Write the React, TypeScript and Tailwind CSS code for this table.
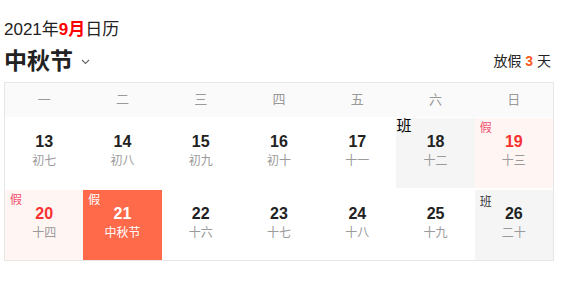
import React from 'react';

type Day = {
  n: number;
  lunar: string;
  kind?: 'work' | 'rest' | 'festival';
};

const weekdays = ['一', '二', '三', '四', '五', '六', '日'];

const rows: Day[][] = [
  [
    { n: 13, lunar: '初七' },
    { n: 14, lunar: '初八' },
    { n: 15, lunar: '初九' },
    { n: 16, lunar: '初十' },
    { n: 17, lunar: '十一' },
    { n: 18, lunar: '十二', kind: 'work' },
    { n: 19, lunar: '十三', kind: 'rest' },
  ],
  [
    { n: 20, lunar: '十四', kind: 'rest' },
    { n: 21, lunar: '中秋节', kind: 'festival' },
    { n: 22, lunar: '十六' },
    { n: 23, lunar: '十七' },
    { n: 24, lunar: '十八' },
    { n: 25, lunar: '十九' },
    { n: 26, lunar: '二十', kind: 'work' },
  ],
];

function Cell({ day, first }: { day: Day; first: boolean }) {
  const bg =
    day.kind === 'work'
      ? 'bg-[#f5f5f6]'
      : day.kind === 'rest'
        ? 'bg-[#fff5f3]'
        : day.kind === 'festival'
          ? 'bg-[#ff6a4b]'
          : 'bg-white';
  const num =
    day.kind === 'rest' ? 'text-[#f73131]' : day.kind === 'festival' ? 'text-white' : 'text-[#222]';
  const lunar = day.kind === 'festival' ? 'text-white' : 'text-[#9a9a9a]';

  return (
    <div className={`relative flex flex-col items-center pt-[13px] ${bg}`}>
      {day.kind === 'work' && first && (
        <span className="absolute left-0 top-[-2px] text-[15px] leading-[20px] text-black">班</span>
      )}
      {day.kind === 'work' && !first && (
        <span className="absolute left-[5px] top-[4px] text-[12px] leading-[16px] text-[#333]">班</span>
      )}
      {(day.kind === 'rest' || day.kind === 'festival') && (
        <span
          className={`absolute left-[5px] top-[2px] text-[12px] leading-[16px] ${
            day.kind === 'festival' ? 'text-white' : 'text-[#f0506e]'
          }`}
        >
          假
        </span>
      )}
      <span className={`text-[16px] leading-[22px] font-bold ${num}`}>{day.n}</span>
      <span className={`text-[12px] leading-[16px] ${lunar}`}>{day.lunar}</span>
    </div>
  );
}

export default function App() {
  return (
    <div
      className="bg-white pl-[4px] pt-[19px] text-[#222]"
      style={{ fontFamily: '"Liberation Sans", "Noto Sans CJK SC", sans-serif' }}
    >
      <div className="text-[17px] leading-[22px]">
        2021年<span className="font-bold text-[#f00]">9月</span>日历
      </div>

      <div className="mt-[5px] flex w-[550px] items-center justify-between">
        <div className="flex items-center">
          <span className="text-[23px] leading-[30px] font-bold text-[#222]">中秋节</span>
          <svg className="ml-[8px] mt-[2px]" width="9" height="6" viewBox="0 0 9 6">
            <path d="M1 1l3.5 3.5L8 1" fill="none" stroke="#666" strokeWidth="1.1" />
          </svg>
        </div>
        <div className="pr-[3px] text-[14px] leading-[20px] text-[#222]">
          放假 <span className="font-bold text-[#fa5b1e]">3</span> 天
        </div>
      </div>

      <div className="mt-[6px] w-[550px] border border-[#e6e6e6]">
        <div className="grid h-[34px] grid-cols-7 items-center bg-[#fafafa]">
          {weekdays.map((w) => (
            <span key={w} className="text-center text-[13px] text-[#999]">
              {w}
            </span>
          ))}
        </div>
        <div className="mt-[1px] grid h-[70px] grid-cols-7">
          {rows[0].map((d) => (
            <Cell key={d.n} day={d} first />
          ))}
        </div>
        <div className="mt-[2px] grid h-[70px] grid-cols-7">
          {rows[1].map((d) => (
            <Cell key={d.n} day={d} first={false} />
          ))}
        </div>
      </div>
    </div>
  );
}
